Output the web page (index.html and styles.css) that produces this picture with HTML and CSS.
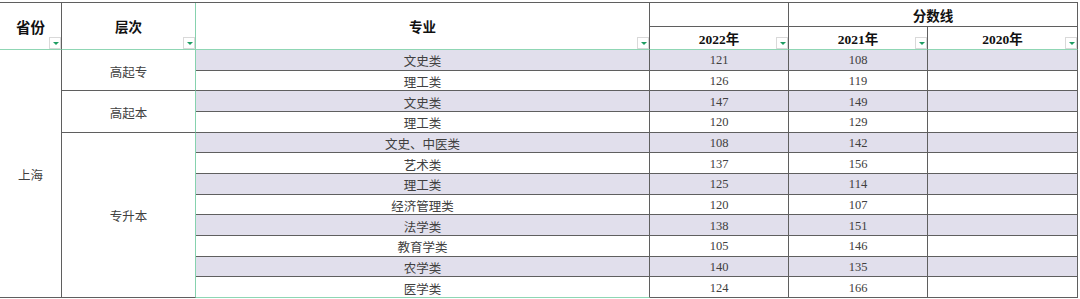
FILE: index.html
```html
<!DOCTYPE html>
<html lang="zh-CN">
<head>
    <meta charset="UTF-8">
    <meta name="viewport" content="width=device-width, initial-scale=1.0">
    <title>分数线</title>
    <link rel="stylesheet" href="styles.css">
</head>
<body>
    <div class="sheet">
        <div class="cell head head--big rows-2 bot-green">省份<span class="filter"></span></div>
        <div class="cell head rows-2 bot-green col-green">层次<span class="filter"></span></div>
        <div class="cell head rows-2 bot-green">专业<span class="filter"></span></div>
        <div class="cell head"></div>
        <div class="cell head cols-2">分数线</div>
        <div class="cell head bot-green">2022年<span class="filter"></span></div>
        <div class="cell head bot-green">2021年<span class="filter"></span></div>
        <div class="cell head bot-green">2020年<span class="filter"></span></div>

        <div class="cell rows-12">上海</div>

        <div class="cell rows-2 col-green">高起专</div>
        <div class="cell shade">文史类</div><div class="cell shade">121</div><div class="cell shade">108</div><div class="cell shade"></div>
        <div class="cell">理工类</div><div class="cell">126</div><div class="cell">119</div><div class="cell"></div>

        <div class="cell rows-2 col-green">高起本</div>
        <div class="cell shade">文史类</div><div class="cell shade">147</div><div class="cell shade">149</div><div class="cell shade"></div>
        <div class="cell">理工类</div><div class="cell">120</div><div class="cell">129</div><div class="cell"></div>

        <div class="cell rows-8 col-green">专升本</div>
        <div class="cell shade">文史、中医类</div><div class="cell shade">108</div><div class="cell shade">142</div><div class="cell shade"></div>
        <div class="cell">艺术类</div><div class="cell">137</div><div class="cell">156</div><div class="cell"></div>
        <div class="cell shade">理工类</div><div class="cell shade">125</div><div class="cell shade">114</div><div class="cell shade"></div>
        <div class="cell">经济管理类</div><div class="cell">120</div><div class="cell">107</div><div class="cell"></div>
        <div class="cell shade">法学类</div><div class="cell shade">138</div><div class="cell shade">151</div><div class="cell shade"></div>
        <div class="cell">教育学类</div><div class="cell">105</div><div class="cell">146</div><div class="cell"></div>
        <div class="cell shade">农学类</div><div class="cell shade">140</div><div class="cell shade">135</div><div class="cell shade"></div>
        <div class="cell bot-green">医学类</div><div class="cell">124</div><div class="cell">166</div><div class="cell"></div>
    </div>
</body>
</html>
```

FILE: styles.css
```css
*{
    padding: 0;
    margin: 0;
    box-sizing: border-box;
}
body{
    background: #fff;
    font-family: "Liberation Serif", "Noto Sans CJK SC", serif;
}
.sheet{
    display: grid;
    grid-template-columns: 62px 134px 454px 139px 139px 150px;
    grid-template-rows: 24px 23px repeat(12, 20.667px);
    margin-top: 2px;
    width: 1078px;
    border-top: 1px solid #5f5f5f;
}
.cell{
    position: relative;
    display: flex;
    align-items: center;
    justify-content: center;
    padding-top: 2px;
    border-right: 1px solid #5f5f5f;
    border-bottom: 1px solid #5f5f5f;
    font-size: 12.5px;
    color: #404040;
    white-space: nowrap;
}
.head{
    padding-top: 0;
    font-size: 13.5px;
    font-weight: bold;
    color: #111;
}
.head--big{
    font-size: 14.5px;
}
.rows-2{
    grid-row: span 2;
}
.rows-8{
    grid-row: span 8;
}
.rows-12{
    grid-row: span 12;
}
.cols-2{
    grid-column: span 2;
}
.shade{
    background-color: #e1dfec;
}
.bot-green{
    border-bottom-color: #8fd6b4;
}
.col-green{
    border-right-color: #86d2ae;
}
.filter{
    position: absolute;
    right: 0;
    bottom: 0;
    width: 12px;
    height: 12px;
    background: #fff;
    border: 1px solid #d9d9d9;
}
.filter::after{
    content: "";
    position: absolute;
    left: 3px;
    top: 4px;
    border-left: 3px solid transparent;
    border-right: 3px solid transparent;
    border-top: 3px solid #1f9d63;
}
```
